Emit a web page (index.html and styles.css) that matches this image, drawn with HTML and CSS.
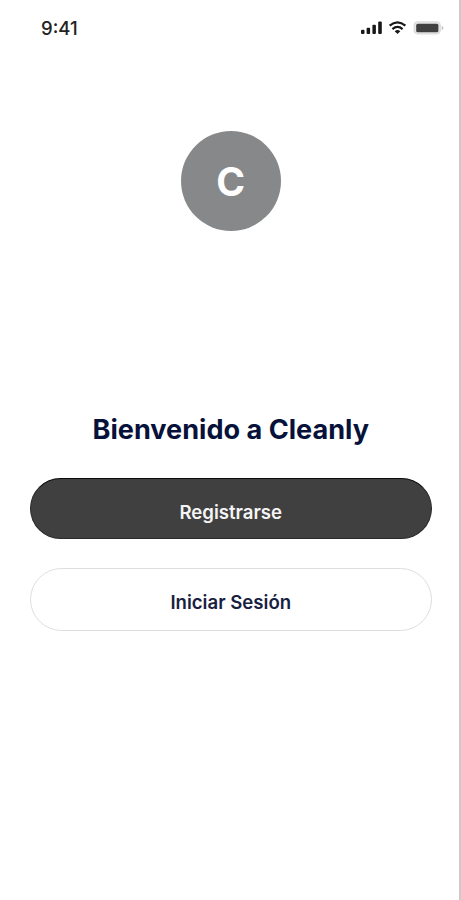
FILE: index.html
```html
<!DOCTYPE html>
<html lang="es">
<head>
<meta charset="utf-8">
<title>Cleanly</title>
<link rel="stylesheet" href="styles.css">
</head>
<body>
<main class="screen">
  <header class="status">
    <span class="time">9:41</span>
    <svg class="indicators" width="84" height="16" viewBox="0 0 84 16" aria-hidden="true">
      <g fill="#181818">
        <rect x="1" y="9.8" width="3.5" height="4.2" rx="1"/>
        <rect x="6.6" y="7.8" width="3.5" height="6.2" rx="1"/>
        <rect x="12.4" y="4.8" width="3.5" height="9.2" rx="1"/>
        <rect x="18.2" y="1.6" width="3.6" height="12.4" rx="1"/>
      </g>
      <g fill="none" stroke="#181818" stroke-width="2.1">
        <path d="M29.6 5.6Q37.5 -1 45.4 5.6"/>
        <path d="M32.4 9.1Q37.5 4.7 42.6 9.1"/>
      </g>
      <path d="M34.7 11.2Q37.5 8.9 40.3 11.2L37.5 14Z" fill="#181818"/>
      <rect x="54.2" y="1.9" width="26" height="12" rx="3.5" fill="#e6e6e6" stroke="#dcdcdc" stroke-width="1.4"/>
      <rect x="56.2" y="3.7" width="22.2" height="8.6" rx="1.6" fill="#404040"/>
      <path d="M81.7 5.8Q83.5 6.5 83.5 8T81.7 10.2Z" fill="#c4c4c4"/>
    </svg>
  </header>
  <div class="logo">C</div>
  <h1 class="title">Bienvenido a Cleanly</h1>
  <div class="actions">
    <button class="btn primary">Registrarse</button>
    <button class="btn secondary">Iniciar Sesión</button>
  </div>
</main>
</body>
</html>
```
FILE: styles.css
```css
* { box-sizing: border-box; }
body {
  margin: 0;
  background: #fff;
  font-family: Inter, "Liberation Sans", sans-serif;
}
.screen {
  display: flex;
  flex-direction: column;
  height: 900px;
  padding: 0 27.5px 0 30px;
  border-right: 2px solid #cbcbcb;
}
.status {
  display: flex;
  justify-content: space-between;
  height: 36px;
  padding: 20px 0 0 11px;
  margin-right: -12px;
}
.time {
  font-size: 18.5px;
  line-height: 17px;
  font-weight: 500;
  color: #222;
}
.logo {
  align-self: center;
  width: 100.5px;
  height: 100.5px;
  margin-top: 94.5px;
  border-radius: 50%;
  background: #86888a;
  color: #fff;
  font-size: 39px;
  font-weight: 700;
  line-height: 101px;
  text-align: center;
}
.title {
  margin: 181.5px 0 0;
  color: #07123a;
  font-size: 27.1px;
  font-weight: 700;
  line-height: 34px;
  text-align: center;
  white-space: nowrap;
}
.actions {
  display: flex;
  flex-direction: column;
  gap: 28.5px;
  margin-top: 31.5px;
}
.btn {
  border-radius: 32px;
  font: 600 18.6px/24px Inter, "Liberation Sans", sans-serif;
}
.primary {
  height: 61px;
  padding: 7px 0 0;
  border: 1px solid #2a2a2a;
  border-top-color: #0c0c0c;
  background: #404040;
  color: #f5f5f5;
}
.secondary {
  height: 63px;
  padding: 5px 0 0;
  border: 1.5px solid #dedede;
  background: #fff;
  color: #17213f;
}
```
